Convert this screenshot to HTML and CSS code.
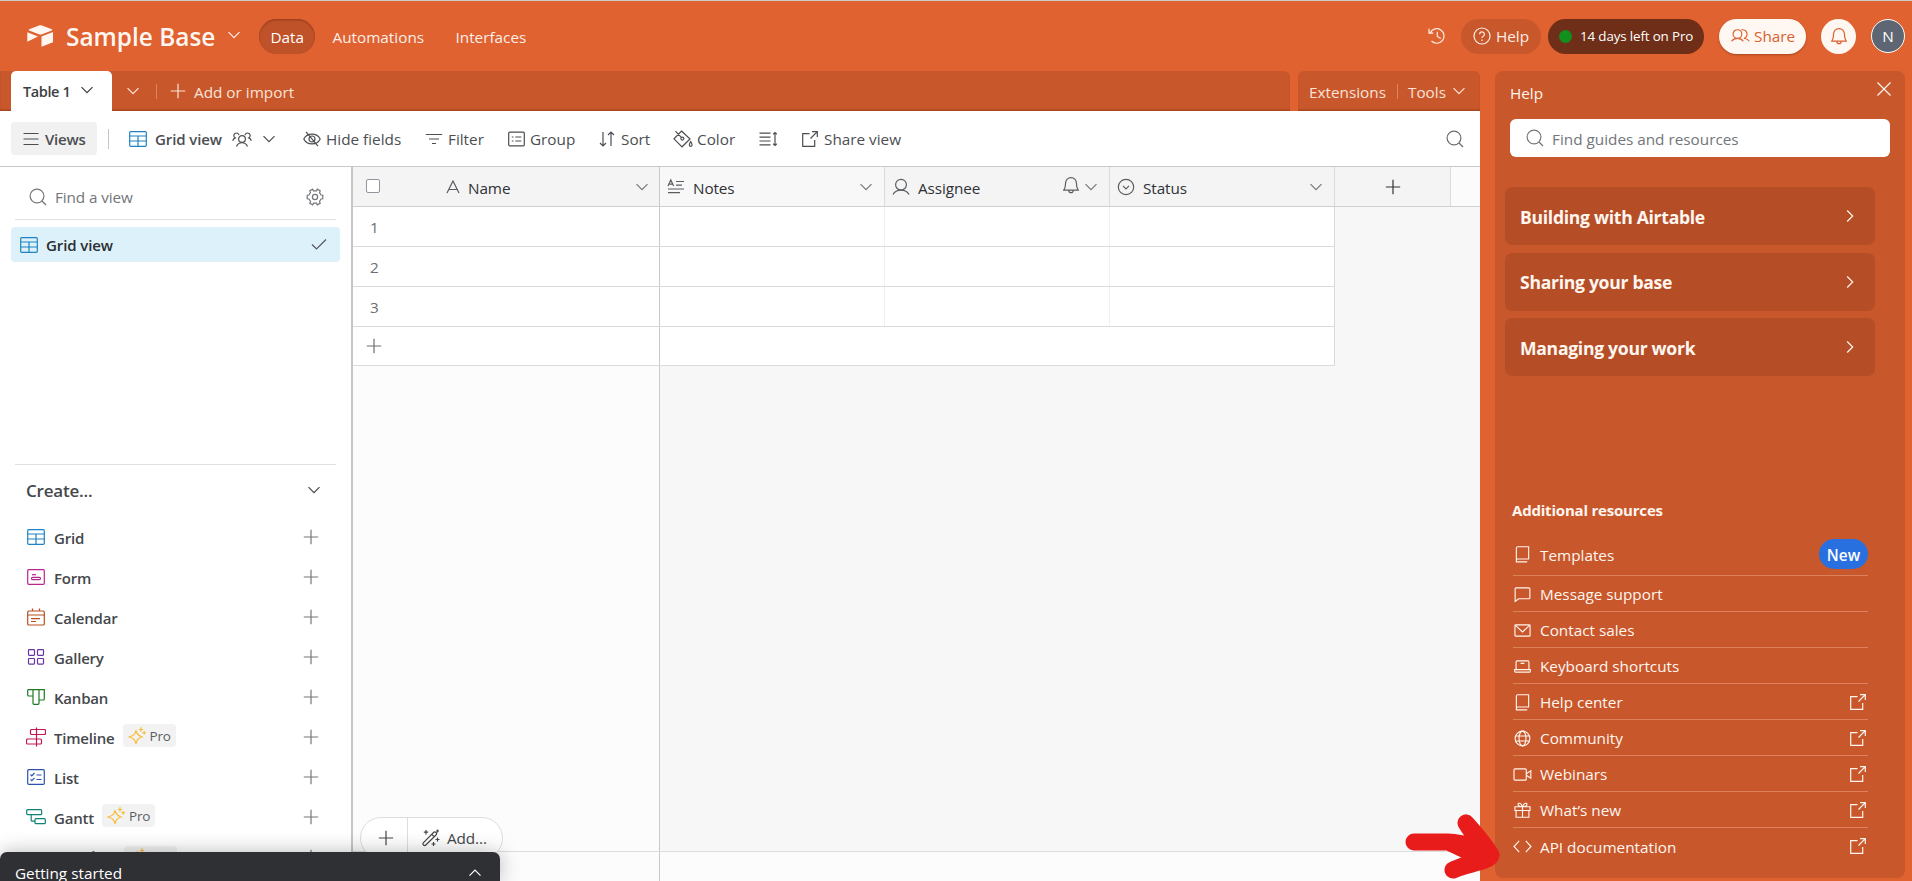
FILE: index.html
```html
<!DOCTYPE html>
<html lang="en">
<head>
<meta charset="utf-8">
<title>Sample Base</title>
<link rel="stylesheet" href="styles.css">
</head>
<body>
<svg class="defs" width="0" height="0" aria-hidden="true">
  <symbol id="chev" viewBox="0 0 16 16"><path d="M2.5 5.2 8 10.7l5.500-5.500"/></symbol>
  <symbol id="chev-up" viewBox="0 0 16 16"><path d="M2.500 10.700 8 5.200l5.500 5.500"/></symbol>
  <symbol id="chev-r" viewBox="0 0 16 16"><path d="M5.200 2.500 10.700 8l-5.500 5.500"/></symbol>
  <symbol id="plus" viewBox="0 0 16 16"><path d="M8 .8v14.400M.8 8h14.400"/></symbol>
  <symbol id="search" viewBox="0 0 18 18"><circle cx="8" cy="8" r="6.900"/><path d="m13 13 4 4"/></symbol>
  <symbol id="grid" viewBox="0 0 18 16"><rect x=".7" y=".7" width="16.600" height="14.600" rx="1"/><path d="M.7 5h16.600M.7 10h16.600M9 5v10"/></symbol>
  <symbol id="ext" viewBox="0 0 16 16"><path d="M7.500 2.700H.7v12.600h12V9M10 .7h5.300V6M15.300.7 8.500 7.500"/></symbol>
  <symbol id="bell" viewBox="0 0 16 18"><path d="M2.600 7a5.400 5.400 0 0 1 10.800 0c0 3.500.7 5.500 1.800 7.200H.8C1.900 12.500 2.600 10.500 2.600 7ZM5.800 14.400a2.200 2.200 0 0 0 4.400 0"/></symbol>
  <symbol id="book" viewBox="0 0 16 18"><path d="M1.500 15V2.200A1.500 1.500 0 0 1 3 .8h11.500v13H3a1.500 1.500 0 0 0-1.500 1.500v1.500H13"/></symbol>
  <symbol id="spark" viewBox="0 0 18 18"><path d="M8 3.500c.8 3.700 2 5 6 6.500-4 1.500-5.200 2.800-6 6.800C7.200 12.800 6 11.500 1 10c5-1.500 6.200-2.800 7-6.500ZM13 .3v4.400M10.800 2.500h4.400M16.200 4v3.600M14.400 5.800H18"/></symbol>
</svg>

<header class="header">
  <svg class="logo" viewBox="0 0 27 22"><path d="M12 .5a4 4 0 0 1 3 0l9.800 3.700c.7.3.7.9 0 1.200L15 9.200a4 4 0 0 1-3 0L2.200 5.400c-.7-.3-.7-.9 0-1.200ZM14.500 11.500 26 7v10.200l-11.500 4.600ZM.3 7.200 11 11.500.3 16.700Z"/></svg>
  <h1 class="base-name">Sample Base</h1>
  <svg class="i base-chev"><use href="#chev"/></svg>
  <nav class="nav">
    <a class="nav-item active">Data</a>
    <a class="nav-item automations">Automations</a>
    <a class="nav-item">Interfaces</a>
  </nav>
  <div class="account">
    <svg class="i history" viewBox="0 0 18 18"><path d="M2.300 5.600A7.300 7.300 0 1 1 3.500 14M1 1.800v4.400h4.400M9.300 4.800v4.700l3.500 2"/></svg>
    <div class="help-pill"><svg class="i i18" viewBox="0 0 18 18"><circle cx="9" cy="9" r="8"/><path d="M6.600 7.200a2.400 2.400 0 1 1 3.600 2.100c-.8.400-1.200.8-1.200 1.700M9 12.600v1.300"/></svg><span>Help</span></div>
    <div class="trial-pill"><i class="dot"></i><span>14 days left on Pro</span></div>
    <div class="share-pill"><svg class="i share-icon" viewBox="0 0 20 16"><circle cx="6.800" cy="6" r="4.600"/><path d="M.6 13.500c2.800-4 9.600-4 12.400 0M11 1.600a4.600 4.600 0 1 1 2.500 9M14.500 10.600c2 .2 3.700 1.200 4.800 2.900"/></svg><span>Share</span></div>
    <div class="bell-pill"><svg class="i bell"><use href="#bell"/></svg></div>
    <div class="avatar">N</div>
  </div>
</header>

<div class="body">
  <main class="main">
    <div class="tabs">
      <div class="tabs-left">
        <div class="tab"><span>Table 1</span><svg class="i i16"><use href="#chev"/></svg></div>
        <svg class="i i16 tab-more"><use href="#chev"/></svg>
        <i class="tab-sep"></i>
        <svg class="i i16 tab-plus"><use href="#plus"/></svg>
        <span>Add or import</span>
      </div>
      <div class="tabs-right"><span>Extensions</span><i class="tab-sep"></i><span>Tools</span><svg class="i i16"><use href="#chev"/></svg></div>
    </div>

    <div class="toolbar">
      <div class="views"><svg class="i i16" viewBox="0 0 16 16"><path d="M.5 2.500h15M.5 8h15M.5 13.500h15"/></svg><span>Views</span></div>
      <i class="sep"></i>
      <div class="tool t-view"><svg class="i grid-icon"><use href="#grid"/></svg><b>Grid view</b>
        <svg class="i people" viewBox="0 0 20 16"><circle cx="10" cy="8" r="3.400"/><path d="M4.500 15.500c2-5 9-5 11 0M7 4.200a2.600 2.600 0 1 0-3.800 2.700C1.800 7.400 1 8.500.7 9.800M13 4.200a2.600 2.600 0 1 1 3.800 2.700c1.400.5 2.200 1.600 2.500 2.900"/></svg>
        <svg class="i i16 view-chev"><use href="#chev"/></svg></div>
      <div class="tool t-hide"><svg class="i i18" viewBox="0 0 18 18"><path d="M.8 9C4 2.500 14 2.500 17.200 9 14 15.500 4 15.500.8 9ZM3 1.800l12 14.400"/><circle cx="9" cy="9" r="3"/></svg><span>Hide fields</span></div>
      <div class="tool t-filter"><svg class="i i18" viewBox="0 0 18 18"><path d="M.8 4.500h16.400M4 9h10M7 13.500h4"/></svg><span>Filter</span></div>
      <div class="tool t-group"><svg class="i i17" viewBox="0 0 17 16"><rect x=".7" y="1.200" width="15.600" height="13.600" rx="1"/><path d="M3.800 6h1.700M7.300 6h6M3.800 10h1.700M7.300 10h6"/></svg><span>Group</span></div>
      <div class="tool t-sort"><svg class="i i16" viewBox="0 0 16 16"><path d="M4 1v14M1 12l3 3 3-3M12 15V1M9 4l3-3 3 3"/></svg><span>Sort</span></div>
      <div class="tool t-color"><svg class="i color-icon" viewBox="0 0 20 18"><path d="m8.500 1 8.500 8-8 7.800L1 8.800ZM2.500 1.200l6 6.500M17.700 11.500c1.700 2.500 1.800 4.800 0 4.800s-1.700-2.300 0-4.800Z"/><circle cx="9.400" cy="8.600" r="1.500"/></svg><span>Color</span></div>
      <div class="tool t-height"><svg class="i i18" viewBox="0 0 18 16"><path d="M.5 2.200h11M.5 6.100h11M.5 10h11M.5 13.900h11M16 1.500v13M14.200 3.200 16 1.500l1.800 1.700M14.200 12.800l1.800 1.700 1.800-1.700"/></svg></div>
      <div class="tool t-share"><svg class="i i16"><use href="#ext"/></svg><span>Share view</span></div>
      <svg class="i i18 tool-search"><use href="#search"/></svg>
    </div>

    <div class="work">
      <aside class="side">
        <div class="find"><svg class="i i18"><use href="#search"/></svg><span>Find a view</span>
          <svg class="i i18 gear" viewBox="0 0 18 18"><path d="m6.700 1.200.8 1.600h3l.8-1.600 2.900 1.600-.7 1.700 1.500 2.500 1.800.2v3.600l-1.800.2-1.500 2.500.7 1.700-2.900 1.600-.8-1.600h-3l-.8 1.600-2.900-1.600.7-1.700L3 11l-1.800-.2V7.200L3 7l1.500-2.500-.7-1.700Z"/><circle cx="9" cy="9" r="2.600"/></svg></div>
        <div class="current"><svg class="i grid-icon"><use href="#grid"/></svg><b>Grid view</b><svg class="i i16 check" viewBox="0 0 16 16"><path d="m1 8.500 4.500 4.500L15 3.500"/></svg></div>
        <div class="create">
          <div class="create-head"><span>Create...</span><svg class="i i16"><use href="#chev"/></svg></div>
          <div class="row"><svg class="i kind blue"><use href="#grid"/></svg><span>Grid</span><svg class="i i16 add"><use href="#plus"/></svg></div>
          <div class="row"><svg class="i kind pink" viewBox="0 0 18 16"><rect x=".7" y=".7" width="16.600" height="14.600" rx="1"/><rect x="4.500" y="8.300" width="9" height="2.400" rx="1.200"/><path d="M5 5.700h4"/></svg><span>Form</span><svg class="i i16 add"><use href="#plus"/></svg></div>
          <div class="row"><svg class="i kind rust" viewBox="0 0 18 18"><rect x=".7" y="3" width="16.600" height="14" rx="1"/><path d="M.7 7h16.600M5.500.5V3M12.500.5V3M4 10.700h9M4 13.500h5"/></svg><span>Calendar</span><svg class="i i16 add"><use href="#plus"/></svg></div>
          <div class="row"><svg class="i kind purple" viewBox="0 0 18 16"><rect x="1.500" y=".7" width="6" height="5.600" rx=".8"/><rect x="10.500" y=".7" width="6" height="5.600" rx=".8"/><rect x="1.500" y="9.500" width="6" height="5.600" rx=".8"/><rect x="10.500" y="9.500" width="6" height="5.600" rx=".8"/></svg><span>Gallery</span><svg class="i i16 add"><use href="#plus"/></svg></div>
          <div class="row"><svg class="i kind green" viewBox="0 0 18 16"><path d="M.7.7h16.600V10a1 1 0 0 1-1 1H12M.7.7V6a1 1 0 0 0 1 1H6M6 .7v13.600a1 1 0 0 0 1 1h4a1 1 0 0 0 1-1V.7"/></svg><span>Kanban</span><svg class="i i16 add"><use href="#plus"/></svg></div>
          <div class="row"><svg class="i kind red" viewBox="0 0 20 20"><path d="M10.500.5v19M5.500 2.500h13a1 1 0 0 1 1 1v3a1 1 0 0 1-1 1h-13a1 1 0 0 1-1-1v-3a1 1 0 0 1 1-1ZM1.500 12h13a1 1 0 0 1 1 1v3a1 1 0 0 1-1 1h-13a1 1 0 0 1-1-1v-3a1 1 0 0 1 1-1Z"/></svg><span>Timeline</span><em class="pro"><svg class="i i18"><use href="#spark"/></svg>Pro</em><svg class="i i16 add"><use href="#plus"/></svg></div>
          <div class="row"><svg class="i kind indigo" viewBox="0 0 18 16"><rect x=".7" y=".7" width="16.600" height="14.600" rx="1"/><path d="m3.500 5.500 1.300 1.300L7.500 4M9.500 6h5M3.500 10.300l1.300 1.300 2.700-2.800M9.500 10.500h5"/></svg><span>List</span><svg class="i i16 add"><use href="#plus"/></svg></div>
          <div class="row"><svg class="i kind teal" viewBox="0 0 20 16"><rect x=".7" y=".7" width="15" height="5" rx="1"/><rect x="9" y="9.700" width="10.300" height="5" rx="1"/><path d="M5.200 5.700v5.500a1 1 0 0 0 1 1H9"/></svg><span>Gantt</span><em class="pro"><svg class="i i18"><use href="#spark"/></svg>Pro</em><svg class="i i16 add"><use href="#plus"/></svg></div>
          <div class="row section"><span>New section</span><em class="pro"><svg class="i i18"><use href="#spark"/></svg>Pro</em><svg class="i i16 add"><use href="#plus"/></svg></div>
        </div>
      </aside>

      <section class="sheet">
        <div class="sheet-head">
          <div class="h h-name"><i class="box"></i><svg class="i a-icon" viewBox="0 0 14 14"><path d="M1 13 7 1l6 12M3 9.500h8"/></svg><span>Name</span><svg class="i i16 hc"><use href="#chev"/></svg></div>
          <div class="h h-notes"><svg class="i i18" viewBox="0 0 18 16"><path d="m1 7 2.800-6 2.800 6M2 5.200h3.700M9 2.500h8M9 6.200h6M1 10h16M1 13.700h12"/></svg><span>Notes</span><svg class="i i16 hc"><use href="#chev"/></svg></div>
          <div class="h"><svg class="i i18" viewBox="0 0 18 18"><circle cx="9" cy="6.700" r="5.400"/><path d="M1 16.500c3.300-5.800 12.700-5.800 16 0"/></svg><span>Assignee</span><svg class="i bell hb"><use href="#bell"/></svg><svg class="i i16 hc near"><use href="#chev"/></svg></div>
          <div class="h"><svg class="i i18" viewBox="0 0 18 18"><circle cx="9" cy="9" r="7.700"/><path d="m6 7.800 3 3 3-3"/></svg><span>Status</span><svg class="i i16 hc"><use href="#chev"/></svg></div>
          <div class="h h-add"><svg class="i i16"><use href="#plus"/></svg></div>
        </div>
        <div class="sheet-body">
          <div class="r"><span>1</span><span></span><span></span><span></span></div>
          <div class="r"><span>2</span><span></span><span></span><span></span></div>
          <div class="r"><span>3</span><span></span><span></span><span></span></div>
          <div class="r last"><span><svg class="i i16"><use href="#plus"/></svg></span><span></span></div>
          <div class="empty"></div>
        </div>
        <div class="sheet-foot"></div>
        <div class="add-pill"><span class="ap-plus"><svg class="i i16"><use href="#plus"/></svg></span><span class="ap-add"><svg class="i i18" viewBox="0 0 18 18"><path d="M11.500 3.500 1.500 13.700a1.600 1.600 0 0 0 2.300 2.300L14 6a1.700 1.700 0 0 0-2.500-2.500ZM10 5.500l2.300 2.300M4 1v4.400M1.800 3.200h4.400M15.500 8.500v4M13.500 10.500h4M11.500 13v4M9.500 15h4M15.500.5v3M14 2h3"/></svg>Add...</span></div>
      </section>
    </div>
    <div class="toast"><span>Getting started</span><svg class="i i16"><use href="#chev-up"/></svg></div>
  </main>

  <aside class="help">
    <div class="help-head"><span>Help</span><svg class="i i16" viewBox="0 0 16 16"><path d="m1.500 1.500 13 13M14.500 1.500l-13 13"/></svg></div>
    <div class="help-search"><svg class="i i18"><use href="#search"/></svg><span>Find guides and resources</span></div>
    <div class="cards">
      <div class="card"><span>Building with Airtable</span><svg class="i i16"><use href="#chev-r"/></svg></div>
      <div class="card"><span>Sharing your base</span><svg class="i i16"><use href="#chev-r"/></svg></div>
      <div class="card"><span>Managing your work</span><svg class="i i16"><use href="#chev-r"/></svg></div>
    </div>
    <h2 class="res-title">Additional resources</h2>
    <div class="res">
      <div class="link first"><svg class="i li"><use href="#book"/></svg><span>Templates</span><em class="new">New</em></div>
      <div class="link"><svg class="i li" viewBox="0 0 18 18"><path d="M1.200 16.200V3a1 1 0 0 1 1-1h13.600a1 1 0 0 1 1 1v9.500a1 1 0 0 1-1 1H5Z"/></svg><span>Message support</span></div>
      <div class="link"><svg class="i li" viewBox="0 0 18 18"><rect x="1" y="3" width="16" height="12" rx=".8"/><path d="m1.500 3.500 7.500 7 7.500-7"/></svg><span>Contact sales</span></div>
      <div class="link"><svg class="i li" viewBox="0 0 18 18"><path d="M2.200 12V4a1 1 0 0 1 1-1h11.600a1 1 0 0 1 1 1v8M.7 12.300h16.600V14a1 1 0 0 1-1 1H1.700a1 1 0 0 1-1-1ZM7 5.700h4"/></svg><span>Keyboard shortcuts</span></div>
      <div class="link"><svg class="i li"><use href="#book"/></svg><span>Help center</span><svg class="i i16 out"><use href="#ext"/></svg></div>
      <div class="link"><svg class="i li" viewBox="0 0 18 18"><circle cx="9" cy="9" r="7.800"/><ellipse cx="9" cy="9" rx="3.700" ry="7.800"/><path d="M1.800 6.300h14.400M1.800 11.700h14.400"/></svg><span>Community</span><svg class="i i16 out"><use href="#ext"/></svg></div>
      <div class="link"><svg class="i li wide" viewBox="0 0 20 18"><rect x="1" y="3" width="13" height="12" rx="1"/><path d="M14 8.200 18.800 5v8L14 9.800"/></svg><span>Webinars</span><svg class="i i16 out"><use href="#ext"/></svg></div>
      <div class="link"><svg class="i li" viewBox="0 0 18 18"><path d="M1 5h16v4H1ZM2.200 9h13.600v7.200H2.200ZM9 5v11.200M9 5C7.500 1 4.500.3 4.300 2.500 4.200 4 6 5 9 5c3 0 4.800-1 4.700-2.500C13.500.3 10.500 1 9 5Z"/></svg><span>What’s new</span><svg class="i i16 out"><use href="#ext"/></svg></div>
      <div class="link end"><svg class="i li wide" viewBox="0 0 20 18"><path d="M6.500 3 1 9l5.500 6M13.500 3 19 9l-5.500 6"/></svg><span>API documentation</span><svg class="i i16 out"><use href="#ext"/></svg></div>
    </div>
  </aside>
</div>
<svg class="pointer" viewBox="0 0 96 66"><path d="M9 29H43C53 29 58 32 66 32M61 10C68 18 79 30 86 42 85 49 60 51 48 57M61 10 83 43 48 57M43 29C55 34 70 36 82 42"/><path class="core" d="M60 28 84 36 85 44 64 47 43 37Z"/></svg>
</body>
</html>
```

FILE: styles.css
```css
* { box-sizing: border-box; }
body {
  margin: 0; width: 1912px; height: 881px; overflow: hidden; position: relative;
  display: flex; flex-direction: column;
  background: #df6230; border-top: 1px solid #cacaca;
  font: 15.3px/20px "Open Sans", "Noto Sans", sans-serif; color: #45474b;
}
h1, h2 { margin: 0; }
em, b { font-style: normal; font-weight: 600; }
.defs { position: absolute; }
.i { fill: none; stroke: currentColor; stroke-width: 1.2; flex: none; width: 18px; height: 18px; }
.i16 { width: 16px; height: 16px; }
.i17 { width: 17px; height: 16px; }

.header { height: 70px; flex: none; display: flex; align-items: center; padding: 0 7px 0 27px; color: #fdeee7; }
.logo { width: 27px; height: 22px; fill: #fff6f1; }
.base-name { width: 149px; margin-left: 12px; font-size: 24.400px; line-height: 30px; font-weight: 600; color: #fff6f1; white-space: nowrap; padding-top: 2px; }
.base-chev { width: 16px; height: 16px; margin-left: 11px; margin-bottom: 2px; }
.nav { display: flex; margin-left: 17px; }
.nav-item { height: 35px; line-height: 36px; padding: 0 11.500px; border-radius: 18px; }
.nav-item.active { width: 56px; background: #bf5229; color: #fff; box-shadow: inset 0 1px 2px rgba(90,30,5,.45); margin-right: 6px; }
.automations { width: 115px; margin-right: 8px; }
.account { margin-left: auto; display: flex; align-items: center; color: #fdeee7; }
.account > div { height: 35px; border-radius: 18px; display: flex; align-items: center; }
.history { margin-right: 15px; }
.help-pill { width: 80px; background: #c8572b; padding-left: 12px; gap: 5px; }
.account .trial-pill { width: 156px; background: #6e2e18; margin-left: 7px; padding-left: 11px; font-size: 13.400px; color: #fff; white-space: nowrap; letter-spacing: -.15px; }
.dot { width: 13px; height: 13px; border-radius: 50%; background: #11901f; margin-right: 8px; }
.share-pill { width: 87px; margin-left: 15px; background: #fff7f2; color: #d9602f; padding-left: 12px; gap: 4px; box-shadow: 0 1px 2px rgba(90,30,5,.4); }
.share-icon { width: 19px; height: 16px; }
.bell-pill { width: 35px; margin-left: 15px; background: #fff7f2; color: #d9602f; justify-content: center; }
.bell { width: 16px; height: 18px; }
.account .avatar { width: 34px; height: 34px; margin-left: 15px; background: #5f6673; border: 1px solid #fff; color: #fff; justify-content: center; }

.body { flex: 1; min-height: 0; display: flex; }
.main { width: 1480px; display: flex; flex-direction: column; position: relative; }
.tabs { height: 40px; flex: none; display: flex; gap: 8px; color: #fbe3d8; }
.tabs-left, .tabs-right { background: #c8572b; display: flex; align-items: center; box-shadow: inset 0 -2px 2px -1px rgba(110,40,10,.5); }
.tabs-left { width: 1290px; border-radius: 0 6px 0 0; padding-left: 11px; }
.tab { width: 101px; height: 40px; background: #fff; color: #3c3e42; border-radius: 5px 5px 0 0; display: flex; align-items: center; padding: 1px 0 0 12px; font-weight: 600; font-size: 14.500px; letter-spacing: -.4px; }
.tab span { width: 56px; }
.tab .i { margin-bottom: 3px; }
.tab-more { margin: 0 15px 0 13px; }
.tab-sep { width: 1px; height: 15px; background: #dd8460; }
.tab-plus { margin: 0 8px 0 13px; }
.tabs-left > .i { margin-bottom: 1px; }
.tabs-right { width: 182px; border-radius: 6px 6px 0 0; padding: 0 13px 0 11px; }
.tabs-right .tab-sep { margin: 0 10px 0 11px; }
.tabs-right .i { margin-left: auto; }
.tabs-left > span, .tabs-right > span { padding-top: 1px; }

.toolbar { height: 56px; flex: none; background: #fff; border-bottom: 1px solid #c8c9ca; display: flex; align-items: center; padding-left: 11px; color: #4c4e52; }
.views { width: 86px; height: 33px; border-radius: 4px; background: #f1f1f1; display: flex; align-items: center; gap: 6px; padding-left: 12px; font-weight: 600; font-size: 15px; letter-spacing: -.25px; }
.sep { width: 1px; height: 20px; background: #c4c5c6; margin: 0 20px 0 11px; }
.tool { display: flex; align-items: center; gap: 6px; white-space: nowrap; }
.grid-icon { width: 18px; height: 16px; color: #1f83c2; }
.tool b { width: 70px; margin: 0 4px 0 2px; }
.tool b, .current b { letter-spacing: -.1px; font-size: 15px; }
.tool .people { width: 20px; height: 16px; margin-left: -3px; }
.view-chev { margin-left: 3px; }
.t-view { width: 174px; } .t-hide { width: 122px; } .t-filter { width: 83px; gap: 5px; }
.t-group { width: 91px; gap: 5px; } .t-sort { width: 74px; } .t-color { width: 86px; gap: 4px; }
.t-hide { gap: 5px; }
.color-icon { width: 20px; height: 18px; }
.t-height { width: 43px; } .t-share { width: 110px; }
.tool-search { margin-left: auto; margin-right: 16px; color: #6a6c70; }

.work { flex: 1; min-height: 0; display: flex; }
.side { width: 351px; background: #fff; overflow: hidden; display: flex; flex-direction: column; }
.find { height: 53px; flex: none; margin: 0 15px; padding: 8px 12px 0 14px; border-bottom: 1px solid #dfe0e1; display: flex; align-items: center; gap: 8px; color: #72757a; letter-spacing: -.1px; }
.gear { margin-left: auto; }
.current { height: 35px; flex: none; margin: 7px 11px 0; background: #dcf1fa; border-radius: 4px; display: flex; align-items: center; gap: 8px; padding: 0 13px 0 9px; color: #2b2d31; }
.current b { padding-top: 1px; }
.check { margin-left: auto; margin-bottom: 2px; color: #55585c; }
.create { margin: 202px 15px 0; border-top: 1px solid #dfe0e1; flex: none; }
.create-head { height: 52px; display: flex; align-items: center; justify-content: space-between; padding: 0 14px 0 11px; font-size: 17px; font-weight: 600; letter-spacing: -.2px; }
.create-head .i { margin-bottom: 2px; }
.row { height: 40px; display: flex; align-items: center; padding: 0 17px 0 12px; font-weight: 600; font-size: 15px; letter-spacing: -.2px; }
.row > span { padding-top: 2px; }
.kind { width: 18px; height: 18px; margin-right: 9px; }
.kind.red, .kind.teal { width: 20px; height: 20px; margin: 0 8px 0 -1px; }
.add { margin-left: auto; color: #75777b; }
.blue { color: #1f83c2; } .pink { color: #b8258f; } .rust { color: #bb4e20; } .purple { color: #6434a8; }
.green { color: #1e7a22; } .red { color: #c21850; } .indigo { color: #2b52ae; } .teal { color: #118078; }
.pro { width: 53px; height: 23px; margin: -3px 0 0 8px; border-radius: 4px; background: #f2f2f2; display: flex; align-items: center; gap: 4px; padding-left: 5px; font-size: 13.500px; color: #5a5d63; font-weight: 400; }
.pro .i { color: #f8bd38; }
.section > span { width: 86px; white-space: nowrap; padding: 0 0 2px; }
.section .pro { margin-left: 11px; margin-top: 0; }

.sheet { flex: 1; border-left: 2px solid #c5c6c7; display: flex; flex-direction: column; background: #f7f7f7; position: relative; }
.sheet-head { height: 40px; flex: none; display: flex; background: #fbfbfb; border-bottom: 1px solid #cfd0d1; color: #2f3136; }
.h { width: 225px; background: #f4f4f4; border-right: 1px solid #d9dbdd; display: flex; align-items: center; padding: 0 10px 0 7px; letter-spacing: -.1px; }
.h > span { padding-top: 2px; margin-left: 8px; }
.h .i { color: #5a5d62; }
.h-name { width: 307px; padding: 0 9px 0 13px; border-right-color: #c8c9ca; }
.h-notes { background: #f8f8f8; }
.box { width: 14px; height: 14px; border: 1px solid #8f969e; border-radius: 2px; background: #fff; margin-bottom: 2px; }
.a-icon { width: 14px; height: 14px; margin-left: 66px; }
.h .hc { margin-left: auto; color: #76797d; }
.hb { margin-left: auto; margin-bottom: 4px; }
.h .near { margin-left: 4px; }
.h-add { width: 116px; justify-content: center; padding: 0; }
.h-add .i { color: #303236; }
.sheet-body { flex: 1; display: flex; flex-direction: column; }
.r { width: 982px; height: 40px; flex: none; display: grid; grid-template-columns: 307px 225px 225px 225px; background: #fff; border-bottom: 1px solid #dadbdc; }
.r > span { border-right: 1px solid #f1f1f2; display: flex; align-items: center; padding: 1px 0 0 17px; color: #6b6e73; }
.r > span:first-child { border-right-color: #c8c9ca; }
.r > span:last-child { border-right-color: #d5dade; }
.r.last { height: 39px; grid-template-columns: 307px 675px; }
.last > span { padding: 0 0 0 13px; }
.empty { width: 307px; flex: 1; background: #fcfcfc; border-right: 1px solid #c8c9ca; }
.sheet-foot { height: 30px; flex: none; border-top: 1px solid #dcddde; background: linear-gradient(90deg, transparent 306px, #c8c9ca 306px, #c8c9ca 307px, transparent 307px), #fcfcfc; }
.add-pill { position: absolute; left: 7px; bottom: 22px; width: 143px; height: 42px; border: 1px solid #dcddde; border-radius: 21px; background: #fff; display: flex; }
.add-pill span { display: flex; align-items: center; }
.ap-plus { width: 47px; border-right: 1px solid #dcddde; padding-left: 17px; }
.ap-add { padding-left: 14px; gap: 7px; letter-spacing: -.1px; }
.toast { position: absolute; left: 0; bottom: 0; width: 500px; height: 29px; background: #2f3034; color: #fff; border-radius: 7px 7px 0 0; display: flex; justify-content: space-between; padding: 11px 17px 0 15px; box-shadow: 0 0 20px rgba(0,0,0,.28); }
.toast .i { margin-top: 2px; }

.help { width: 410px; height: 807px; margin-left: 15px; background: #c8572b; border-radius: 8px; padding: 0 15px; color: #fff6f0; }
.help-head { height: 48px; display: flex; justify-content: space-between; padding-top: 12px; }
.help-head .i { margin: -2px -2px 0 0; }
.help-search { height: 38px; border-radius: 6px; background: #fff; color: #73767b; display: flex; align-items: center; gap: 8px; padding-left: 16px; }
.help-search span { padding-top: 2px; }
.cards { display: flex; flex-direction: column; gap: 7.500px; margin: 30px 15px 0 -5px; }
.card { height: 58px; border-radius: 7px; background: #b54e26; display: flex; align-items: center; justify-content: space-between; padding: 0 17px 0 15px; font-size: 17.600px; font-weight: 700; letter-spacing: -.3px; }
.card span { padding-top: 1px; }
.res-title { font-size: 15px; line-height: 20px; font-weight: 700; margin: 124px 0 0 2px; letter-spacing: -.2px; }
.res { margin: 15px 22px 0 3px; }
.link { height: 36px; display: flex; align-items: center; border-bottom: 1px solid #dc8159; }
.link.first { height: 41px; }
.link.end { border: 0; }
.li { width: 17px; height: 17px; margin: 1px 9px 0 1px; }
.li.wide { width: 19px; margin: 1px 8px 0 0; }
.first .li { margin-top: -2px; }
.link > span { padding-top: 1px; }
.first > span { padding-top: 0; }
.out { margin-left: auto; margin-right: 2px; }
.new { margin: -2px 0 0 auto; width: 49px; height: 30px; line-height: 32px; border-radius: 15px; text-align: center; background: #2870df; color: #fff; }

.pointer { position: absolute; left: 1405px; top: 812px; width: 96px; height: 66px; fill: none; stroke: #e71c1b; stroke-width: 17px; stroke-linecap: round; stroke-linejoin: round; }
.pointer .core { fill: #e71c1b; stroke-width: 2px; }
```
